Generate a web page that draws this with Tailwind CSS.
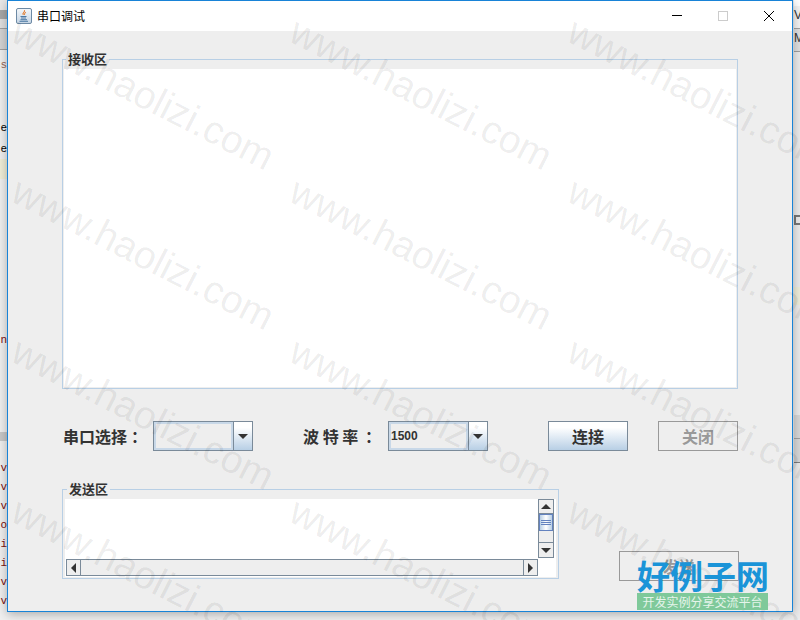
<!DOCTYPE html>
<html lang="zh-CN">
<head>
    <meta charset="UTF-8">
    <title>串口调试</title>
    <script src="https://cdn.jsdelivr.net/npm/@tailwindcss/browser@4"></script>
</head>
<body class="relative w-[800px] h-[620px] overflow-hidden bg-[#f0f0f0] font-['Noto_Sans_CJK_SC','Liberation_Sans',sans-serif]">

    <!-- IDE behind the window, left edge -->
    <div class="absolute left-0 top-0 w-[7px] h-[620px] overflow-hidden flex flex-col items-end font-['Liberation_Mono',monospace] text-[11px] leading-[19px]">
        <div class="w-full h-[10px] bg-[#e8e8e8] shrink-0"></div>
        <div class="w-full h-[9px] bg-[#a8a8a8] shrink-0"></div>
        <div class="w-full h-[10px] bg-[#e0e0e0] border-b border-[#a0a0a0] shrink-0"></div>
        <div class="w-full h-[21px] bg-[#d4d4d4] border-b border-[#a0a0a0] shrink-0"></div>
        <div class="h-[6px] shrink-0"></div>
        <div class="text-[#9a6a5a] shrink-0">s</div>
        <div class="h-[44px] shrink-0"></div>
        <div class="text-black shrink-0">e</div>
        <div class="text-black shrink-0 mt-[2px]">e</div>
        <div class="w-full h-[20px] bg-[#f0efd8] shrink-0"></div>
        <div class="h-[152px] shrink-0"></div>
        <div class="text-[#7a1010] shrink-0">n</div>
        <div class="h-[82px] shrink-0"></div>
        <div class="w-full h-[9px] bg-[#c8c8c8] shrink-0"></div>
        <div class="h-[18px] shrink-0"></div>
        <div class="text-[#7a1010] shrink-0">v</div>
        <div class="text-[#7a1010] shrink-0">v</div>
        <div class="text-[#7a1010] shrink-0">v</div>
        <div class="text-[#7a1010] shrink-0">o</div>
        <div class="text-[#7a1010] shrink-0">i</div>
        <div class="text-[#7a1010] shrink-0">i</div>
        <div class="text-[#7a1010] shrink-0">v</div>
        <div class="text-[#7a1010] shrink-0">v</div>
    </div>

    <!-- IDE behind the window, right edge -->
    <div class="absolute left-[793px] top-0 w-[7px] h-[620px] overflow-hidden flex flex-col pl-[1px] bg-[#ececec] text-[12px] leading-[19px] font-['Liberation_Sans',sans-serif]">
        <div class="h-[6px] bg-white shrink-0"></div>
        <div class="text-[#333] bg-[#f4f4f4] h-[22px] shrink-0">V</div>
        <div class="text-[#333] bg-[#e0e0e0] border-y border-[#a0a0a0] h-[24px] shrink-0">M</div>
        <div class="h-[163px] shrink-0"></div>
        <div class="h-[10px] w-[7px] border-2 border-r-0 border-[#777777] shrink-0"></div>
        <div class="h-[62px] shrink-0"></div>
        <div class="h-[18px] bg-[#efeeda] shrink-0"></div>
        <div class="h-[110px] shrink-0"></div>
        <div class="h-[24px] bg-[#d8d8d8] border-b border-[#a0a0a0] shrink-0"></div>
        <div class="h-[24px] bg-[#d8d8d8] border-b border-[#808080] shrink-0"></div>
    </div>

    <!-- Window -->
    <div class="absolute left-[7px] top-0 w-[786px] h-[612px] border border-[#1883d7] bg-[#eeeeee] shadow-[0_2px_10px_rgba(0,0,0,0.3)] flex flex-col">
        <!-- Title bar -->
        <div class="h-[30px] bg-white flex items-center shrink-0">
            <svg class="ml-[8px] w-[16px] h-[16px]" viewBox="0 0 16 16">
                <defs>
                    <linearGradient id="ico" x1="0" y1="0" x2="0" y2="1">
                        <stop offset="0" stop-color="#f4f7fa"/>
                        <stop offset="1" stop-color="#c4d4e4"/>
                    </linearGradient>
                </defs>
                <rect x="0.5" y="0.5" width="15" height="15" rx="1.5" fill="url(#ico)" stroke="#6d8aa5"/>
                <path d="M8.5 2.2C9.5 4 6.5 4.8 7.2 6.8C6 5.2 8.6 4 8.5 2.2Z M9.8 4C9.5 5 8 5.5 8.6 7C8 6 9 4.8 9.8 4Z" fill="#e0701c" stroke="#e0701c" stroke-width="0.6"/>
                <path d="M4.5 8.5H10.5M5 10H10M4.5 11.7H11M3.5 13.3H12" stroke="#4e7ba6" stroke-width="1" fill="none"/>
            </svg>
            <span class="ml-[5px] text-[12px] leading-[16px] text-black">串口调试</span>
            <div class="ml-auto flex items-center">
                <svg class="w-[46px] h-[30px]" viewBox="0 0 46 30"><path d="M18 14.5H28" stroke="#000" stroke-width="1"/></svg>
                <svg class="w-[46px] h-[30px]" viewBox="0 0 46 30"><rect x="18.5" y="10.5" width="9" height="9" fill="none" stroke="#cccccc"/></svg>
                <svg class="w-[46px] h-[30px]" viewBox="0 0 46 30"><path d="M18 10L28 20M28 10L18 20" stroke="#000" stroke-width="1"/></svg>
            </div>
        </div>

        <div class="flex flex-col pl-[54px] pt-[18px]">
            <!-- Receive area -->
            <fieldset class="w-[676px] h-[340px] border border-[#b8cfe5] px-[1px] pb-[1px] flex flex-col">
                <legend class="ml-[2px] px-[2px] h-[20px] leading-[20px] text-[13px] font-bold text-[#333333]">接收区</legend>
                <div class="w-[672px] h-[318px] bg-white"></div>
            </fieldset>

            <!-- Port row -->
            <div class="mt-[32px] h-[30px] flex items-center">
                <span class="ml-[1px] w-[90px] text-[16px] font-bold text-[#333333]">串口选择<span class="ml-[4px] font-['Noto_Sans_CJK_TC',sans-serif]">：</span></span>
                <div class="w-[100px] h-[30px] border border-[#7a8a99] flex">
                    <div class="w-[79px] border-2 border-[#c8d8e8]"></div>
                    <div class="w-[19px] border-l border-[#7a8a99] bg-linear-to-b from-white from-20% to-[#b8cfe5] flex items-center justify-center">
                        <svg class="w-[10px] h-[5px]" viewBox="0 0 10 5"><path d="M0 0H10L5 5Z" fill="#333333"/></svg>
                    </div>
                </div>
                <span class="ml-[50px] w-[85px] text-[16px] font-bold text-[#333333] whitespace-pre">波 特 率 <span class="ml-[3px] font-['Noto_Sans_CJK_TC',sans-serif]">：</span></span>
                <div class="w-[100px] h-[30px] border border-[#7a8a99] flex">
                    <div class="w-[79px] border-2 border-[#c8d8e8] flex items-center text-[12px] font-bold text-[#333333] font-['Liberation_Sans',sans-serif]">1500</div>
                    <div class="w-[19px] border-l border-[#7a8a99] bg-linear-to-b from-white from-20% to-[#b8cfe5] flex items-center justify-center">
                        <svg class="w-[10px] h-[5px]" viewBox="0 0 10 5"><path d="M0 0H10L5 5Z" fill="#333333"/></svg>
                    </div>
                </div>
                <button class="ml-[60px] w-[80px] h-[30px] border border-[#7a8a99] bg-linear-to-b from-white from-20% to-[#b8cfe5] text-[16px] font-bold text-[#333333]">连接</button>
                <button class="ml-[30px] w-[80px] h-[30px] border border-[#999999] text-[16px] font-bold text-[#999999]">关闭</button>
            </div>

            <!-- Send row -->
            <div class="mt-[28px] flex items-start">
                <fieldset class="w-[496px] h-[100px] border border-[#b8cfe5] px-[2px] flex flex-col">
                    <legend class="ml-[2px] px-[2px] h-[20px] leading-[20px] text-[13px] font-bold text-[#333333]">发送区</legend>
                    <div class="w-[491px] h-[78px] bg-white flex">
                        <div class="w-[473px] flex flex-col">
                            <div class="h-[60px]"></div>
                            <!-- Horizontal scrollbar -->
                            <div class="h-[17px] ml-[1px] border-y border-[#7a8a99] bg-[#eeeeee] flex">
                                <div class="w-[15px] border-x border-[#7a8a99] flex items-center justify-center">
                                    <svg class="w-[5px] h-[10px]" viewBox="0 0 5 10"><path d="M5 0V10L0 5Z" fill="#333333"/></svg>
                                </div>
                                <div class="flex-1"></div>
                                <div class="w-[15px] border-x border-[#7a8a99] flex items-center justify-center">
                                    <svg class="w-[5px] h-[10px]" viewBox="0 0 5 10"><path d="M0 0V10L5 5Z" fill="#333333"/></svg>
                                </div>
                            </div>
                        </div>
                        <!-- Vertical scrollbar -->
                        <div class="w-[16px] h-[59px] border-x border-[#7a8a99] flex flex-col">
                            <div class="h-[15px] border-y border-[#7a8a99] bg-[#eeeeee] flex items-center justify-center">
                                <svg class="w-[10px] h-[5px]" viewBox="0 0 10 5"><path d="M0 5H10L5 0Z" fill="#333333"/></svg>
                            </div>
                            <div class="h-[17px] border border-[#6382bf] bg-linear-to-r from-[#b8cfe5] via-white to-[#b8cfe5] flex flex-col items-center justify-center gap-[1px]">
                                <div class="w-[10px] h-[1px] bg-[#6382bf]"></div>
                                <div class="w-[10px] h-[1px] bg-[#6382bf]"></div>
                                <div class="w-[10px] h-[1px] bg-[#6382bf]"></div>
                            </div>
                            <div class="h-[11px] bg-[#eeeeee]"></div>
                            <div class="h-[16px] border-y border-[#7a8a99] bg-[#eeeeee] flex items-center justify-center">
                                <svg class="w-[10px] h-[5px]" viewBox="0 0 10 5"><path d="M0 0H10L5 5Z" fill="#333333"/></svg>
                            </div>
                        </div>
                    </div>
                </fieldset>
                <button class="ml-[60px] mt-[72px] w-[120px] h-[30px] border border-[#999999] text-[16px] font-bold text-[#999999]">发送</button>
            </div>
        </div>
    </div>

    <!-- Watermark -->
    <div class="absolute inset-0 overflow-hidden pointer-events-none">
        <div class="ml-[4px] mt-[14px] grid grid-cols-[278px_278px_278px] auto-rows-[160px] font-['Liberation_Sans',sans-serif] text-[39px] text-black/[0.08]">
            <div class="flex items-center justify-center rotate-[27deg] whitespace-nowrap">www.haolizi.com</div>
            <div class="flex items-center justify-center rotate-[27deg] whitespace-nowrap">www.haolizi.com</div>
            <div class="flex items-center justify-center rotate-[27deg] whitespace-nowrap">www.haolizi.com</div>
            <div class="flex items-center justify-center rotate-[27deg] whitespace-nowrap">www.haolizi.com</div>
            <div class="flex items-center justify-center rotate-[27deg] whitespace-nowrap">www.haolizi.com</div>
            <div class="flex items-center justify-center rotate-[27deg] whitespace-nowrap">www.haolizi.com</div>
            <div class="flex items-center justify-center rotate-[27deg] whitespace-nowrap">www.haolizi.com</div>
            <div class="flex items-center justify-center rotate-[27deg] whitespace-nowrap">www.haolizi.com</div>
            <div class="flex items-center justify-center rotate-[27deg] whitespace-nowrap">www.haolizi.com</div>
            <div class="flex items-center justify-center rotate-[27deg] whitespace-nowrap">www.haolizi.com</div>
            <div class="flex items-center justify-center rotate-[27deg] whitespace-nowrap">www.haolizi.com</div>
            <div class="flex items-center justify-center rotate-[27deg] whitespace-nowrap">www.haolizi.com</div>
        </div>
    </div>

    <!-- Site logo -->
    <div class="absolute left-[637px] top-[557px] w-[131px] flex flex-col">
        <div class="h-[36px] text-[33px] leading-[36px] font-bold text-[#1a94d8] text-center whitespace-nowrap font-['Noto_Sans_CJK_SC',serif]">好例子网</div>
        <div class="h-[17px] bg-[#7fc99a] text-[12px] leading-[17px] text-white/80 text-center whitespace-nowrap">开发实例分享交流平台</div>
    </div>
</body>
</html>
